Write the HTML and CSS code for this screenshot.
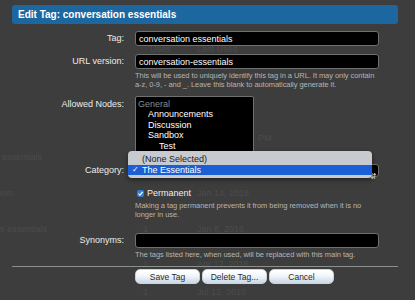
FILE: index.html
```html
<!DOCTYPE html>
<html lang="en">
<head>
    <meta charset="UTF-8">
    <title>Edit Tag: conversation essentials</title>
    <link rel="stylesheet" href="styles.css">
</head>
<body>

<div class="backdrop">
    <span class="ghost" style="left:150px;top:44px">Uses</span>
    <span class="ghost" style="left:197px;top:44px">Last Used</span>
    <span class="ghost" style="left:258px;top:133px">PM</span>
    <span class="ghost" style="left:2px;top:152px">essentials</span>
    <span class="ghost" style="left:0px;top:188px">ion:</span>
    <span class="ghost" style="left:197px;top:188px">Jan 14, 2016</span>
    <span class="ghost" style="left:0px;top:224px">s essentials</span>
    <span class="ghost" style="left:143px;top:224px">1</span>
    <span class="ghost" style="left:197px;top:224px">Jan 8, 2016</span>
    <span class="ghost" style="left:143px;top:259px">1</span>
    <span class="ghost" style="left:197px;top:259px">Apr 17, 2016</span>
    <span class="ghost" style="left:143px;top:287px">1</span>
    <span class="ghost" style="left:197px;top:287px">Jul 12, 2016</span>
</div>

<div class="overlay">
    <h2 class="title">Edit Tag: conversation essentials</h2>

    <form class="form">
        <div class="row">
            <label class="label" for="tag">Tag:</label>
            <div class="ctrl">
                <input class="text" type="text" id="tag" value="conversation essentials">
            </div>
        </div>

        <div class="row">
            <label class="label" for="url">URL version:</label>
            <div class="ctrl">
                <input class="text" type="text" id="url" value="conversation-essentials">
                <p class="hint">This will be used to uniquely identify this tag in a URL. It may only contain<br>a-z, 0-9, - and _. Leave this blank to automatically generate it.</p>
            </div>
        </div>

        <div class="row">
            <label class="label">Allowed Nodes:</label>
            <div class="ctrl">
                <div class="listbox">
                    <div class="opt cat">General</div>
                    <div class="opt d1">Announcements</div>
                    <div class="opt d1">Discussion</div>
                    <div class="opt d1">Sandbox</div>
                    <div class="opt d2">Test</div>
                </div>
            </div>
        </div>

        <div class="row row-select">
            <label class="label">Category:</label>
            <div class="ctrl">
                <div class="select"><span class="arrows">&#8693;</span></div>
                <div class="popup">
                    <div class="pop-item">(None Selected)</div>
                    <div class="pop-item picked"><span class="tick">&#10003;</span>The Essentials</div>
                </div>
            </div>
        </div>

        <div class="row row-check">
            <div class="label"></div>
            <div class="ctrl">
                <div class="check">
                    <span class="box">
                        <svg width="7" height="7" viewBox="0 0 7 7"><path d="M1.5 3.6 L3 5.1 L5.6 1.8" fill="none" stroke="#fff" stroke-width="1.2"/></svg>
                    </span>
                    Permanent
                </div>
                <p class="hint">Making a tag permanent prevents it from being removed when it is no<br>longer in use.</p>
            </div>
        </div>

        <div class="row row-syn">
            <label class="label" for="syn">Synonyms:</label>
            <div class="ctrl">
                <input class="text" type="text" id="syn" value="">
                <p class="hint">The tags listed here, when used, will be replaced with this main tag.</p>
            </div>
        </div>

        <div class="buttons">
            <button type="button" class="btn">Save Tag</button>
            <button type="button" class="btn">Delete Tag...</button>
            <button type="button" class="btn">Cancel</button>
        </div>
    </form>
</div>

</body>
</html>
```

FILE: styles.css
```css
html, body {
    margin: 0;
    height: 100%;
    overflow: hidden;
}
body {
    background: #3d3d3d;
    font-family: "Liberation Sans", Arial, sans-serif;
    color: #e6e6e6;
    position: relative;
}
.backdrop {
    position: absolute;
    inset: 0;
}
.ghost {
    position: absolute;
    font-size: 9px;
    color: #4c4c4c;
    white-space: nowrap;
}
.overlay {
    position: relative;
    padding: 5px 17px 0 12px;
}
.title {
    margin: 0;
    height: 19px;
    line-height: 19px;
    padding-left: 6px;
    background: #1d67a0;
    border-radius: 3px;
    color: #fff;
    font-size: 10px;
    font-weight: bold;
}
.form {
    margin: 7px 0 0;
}
.row {
    display: grid;
    grid-template-columns: 112px 243px;
    column-gap: 11px;
    margin-bottom: 8px;
}
.label {
    text-align: right;
    font-size: 9px;
    line-height: 15px;
    color: #ececec;
}
.ctrl {
    position: relative;
}
.text {
    display: block;
    box-sizing: border-box;
    width: 244px;
    height: 15px;
    margin: 0;
    padding: 0 3px;
    background: #000;
    border: 1px solid #707070;
    border-radius: 3px;
    color: #fff;
    font-family: inherit;
    font-size: 9px;
}
.hint {
    margin: 2px 0 0;
    font-size: 7.5px;
    letter-spacing: -0.06px;
    line-height: 9px;
    color: #b4b4b4;
    white-space: nowrap;
}
.listbox {
    box-sizing: border-box;
    width: 119px;
    height: 62px;
    margin-top: -1px;
    padding-top: 2px;
    background: #000;
    border: 1px solid #707070;
    border-radius: 2px;
    overflow: hidden;
}
.opt {
    font-size: 9px;
    line-height: 10.4px;
    color: #fff;
    padding-left: 2px;
}
.opt.cat { color: #8a8a8a; }
.opt.d1 { padding-left: 12px; }
.opt.d2 { padding-left: 23px; }
.row-select {
    margin-top: -2px;
    margin-bottom: 11px;
}
.row-select .label {
    line-height: 13px;
}
.select {
    box-sizing: border-box;
    width: 244px;
    height: 13px;
    background: #000;
    border: 1px solid #707070;
    border-radius: 3px;
    text-align: right;
}
.arrows {
    font-size: 8px;
    line-height: 11px;
    color: #ddd;
    padding-right: 1px;
}
.popup {
    position: absolute;
    left: -7px;
    top: -13px;
    width: 244px;
    padding: 3px 0 2px;
    background: #c7cbd0;
    border-radius: 4px;
    box-shadow: 0 2px 5px rgba(0, 0, 0, 0.45);
}
.pop-item {
    height: 10px;
    line-height: 10px;
    padding-left: 14px;
    margin-bottom: 1px;
    font-size: 9px;
    color: #1c1c1c;
    position: relative;
}
.pop-item.picked {
    background: #1b5fd6;
    color: #fff;
}
.tick {
    position: absolute;
    left: 4px;
    font-size: 8px;
}
.row-check {
    margin-bottom: 14px;
}
.check {
    display: flex;
    align-items: center;
    gap: 3px;
    font-size: 9px;
    line-height: 11px;
    color: #f0f0f0;
    padding-left: 2px;
}
.box {
    display: inline-flex;
    width: 7px;
    height: 7px;
    border-radius: 2px;
    background: #2e7fd9;
}
.row-syn {
    margin-bottom: 0;
}
.buttons {
    margin-top: 7px;
    border-top: 1px solid #8a8f8d;
    padding: 2px 0 0 123px;
    display: flex;
    gap: 2px;
}
.btn {
    width: 65px;
    height: 15px;
    padding: 0;
    border: 1px solid #cdd3da;
    border-radius: 5px;
    background: linear-gradient(#ffffff, #f3f6f9 45%, #c9d7e6);
    color: #2b2b2b;
    font-family: inherit;
    font-size: 8.5px;
}
```
